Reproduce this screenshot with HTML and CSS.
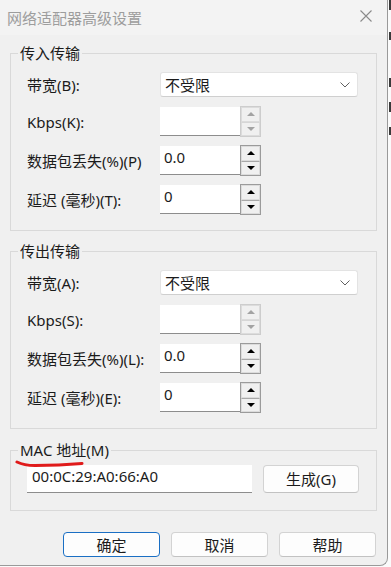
FILE: index.html
```html
<!doctype html>
<html lang="zh-CN">
  <head>
    <meta charset="UTF-8">
    <meta name="viewport" content="width=device-width, initial-scale=1.0">
    <title>网络适配器高级设置</title>
    <link rel="stylesheet" href="styles.css">
  </head>
  <body>
    <div class="dialog">
      <div class="titlebar">
        <span class="title">网络适配器高级设置</span>
        <svg class="close" width="12" height="12" viewBox="0 0 12 12"><path d="M0.5 0.5L11.5 11.5M11.5 0.5L0.5 11.5"/></svg>
      </div>

      <!-- incoming -->
      <fieldset class="group">
        <legend>传入传输</legend>
        <div class="rows">
          <label>带宽(B):</label>
          <div class="select">
            <span>不受限</span>
            <svg width="10" height="6" viewBox="0 0 10 6"><path d="M0.5 0.5L5 5L9.5 0.5"/></svg>
          </div>

          <label>Kbps(K):</label>
          <div class="spin disabled">
            <div class="field"></div>
            <div class="arrows"><span class="btn"><i class="up"></i></span><span class="btn"><i class="down"></i></span></div>
          </div>

          <label>数据包丢失(%)(P)</label>
          <div class="spin">
            <div class="field">0.0</div>
            <div class="arrows"><span class="btn"><i class="up"></i></span><span class="btn"><i class="down"></i></span></div>
          </div>

          <label>延迟 (毫秒)(T):</label>
          <div class="spin">
            <div class="field">0</div>
            <div class="arrows"><span class="btn"><i class="up"></i></span><span class="btn"><i class="down"></i></span></div>
          </div>
        </div>
      </fieldset>

      <!-- outgoing -->
      <fieldset class="group">
        <legend>传出传输</legend>
        <div class="rows">
          <label>带宽(A):</label>
          <div class="select">
            <span>不受限</span>
            <svg width="10" height="6" viewBox="0 0 10 6"><path d="M0.5 0.5L5 5L9.5 0.5"/></svg>
          </div>

          <label>Kbps(S):</label>
          <div class="spin disabled">
            <div class="field"></div>
            <div class="arrows"><span class="btn"><i class="up"></i></span><span class="btn"><i class="down"></i></span></div>
          </div>

          <label>数据包丢失(%)(L):</label>
          <div class="spin">
            <div class="field">0.0</div>
            <div class="arrows"><span class="btn"><i class="up"></i></span><span class="btn"><i class="down"></i></span></div>
          </div>

          <label>延迟 (毫秒)(E):</label>
          <div class="spin">
            <div class="field">0</div>
            <div class="arrows"><span class="btn"><i class="up"></i></span><span class="btn"><i class="down"></i></span></div>
          </div>
        </div>
      </fieldset>

      <!-- mac -->
      <fieldset class="group mac">
        <legend>MAC 地址(M)</legend>
        <svg class="mark" width="70" height="8" viewBox="0 0 70 8"><path d="M2 2C6 4 10 5.5 20 5.5C34 5.5 50 5 67 3.5"/></svg>
        <div class="mac-row">
          <div class="field mac-field">00:0C:29:A0:66:A0</div>
          <button class="button gen">生成(G)</button>
        </div>
      </fieldset>

      <div class="footer">
        <button class="button default">确定</button>
        <button class="button">取消</button>
        <button class="button">帮助</button>
      </div>
    </div>

    <div class="behind">
      <span class="frag f1"></span>
      <span class="frag f2"></span>
      <span class="frag f3"></span>
      <span class="frag f4"></span>
      <span class="frag f5"></span>
    </div>
  </body>
</html>
```

FILE: styles.css
```css
html,
body {
  margin: 0;
  height: 100%;
}

body {
  display: flex;
  background: #fbfbfb;
  font-family: "Noto Sans", "Noto Sans CJK SC", sans-serif;
  font-size: 15px;
  color: #1b1b1b;
  overflow: hidden;
}

.dialog {
  width: 387px;
  height: 565px;
  flex: none;
  background: #f0f0f0;
  border-right: 1px solid #9a9a9a;
  border-bottom: 1px solid #9a9a9a;
  border-bottom-right-radius: 8px;
}

.titlebar {
  height: 35px;
  display: flex;
  align-items: center;
  justify-content: space-between;
  padding: 0 15px 0 7px;
  background: #f3f3f3;
}

.title {
  color: #9d9d9d;
  line-height: 20px;
}

.close path {
  stroke: #8a8a8a;
  stroke-width: 1.1;
  fill: none;
}

.close {
  margin-top: -3px;
}

.group {
  width: 365px;
  margin: 8px 0 0 10px;
  padding: 0 0 16px 0;
  border: 1px solid #d9d9d9;
  min-width: 0;
  position: relative;
}

.group + .group {
  margin-top: 10px;
}

.group.mac {
  margin-top: 11px;
  padding-bottom: 17px;
}

legend {
  margin-left: 7px;
  padding: 0 2px;
  line-height: 20px;
}

.rows {
  display: grid;
  grid-template-columns: 133px auto;
  row-gap: 10px;
  align-items: center;
  padding: 9px 0 0 16px;
}

.rows label {
  line-height: 20px;
  white-space: nowrap;
}

.select {
  width: 185px;
  height: 23px;
  display: flex;
  align-items: center;
  justify-content: space-between;
  padding: 0 7px 0 4px;
  background: #fff;
  border: 1px solid #e3e3e3;
  border-bottom-color: #cfcfcf;
  border-radius: 3px;
  line-height: 20px;
}

.select path {
  stroke: #606060;
  stroke-width: 1;
  fill: none;
}

.spin {
  display: flex;
  height: 29px;
}

.field {
  background: #fff;
  border-bottom: 1px solid #8d8d8d;
  width: 76px;
  height: 28px;
  padding-left: 4px;
  line-height: 22px;
}

.arrows {
  display: flex;
  flex-direction: column;
  border: 1px solid #9b9b9b;
  box-sizing: border-box;
  margin-top: -1px;
  height: 31px;
  width: 21px;
}

.btn {
  flex: 1;
  display: flex;
  align-items: center;
  justify-content: center;
  background: #f0f0f0;
  border: 1px solid #dcdcdc;
}

.btn + .btn {
  border-top-color: #a8a8a8;
}

.up,
.down {
  width: 0;
  height: 0;
  border-left: 4px solid transparent;
  border-right: 4px solid transparent;
}

.up {
  border-bottom: 4px solid #000;
}

.down {
  border-top: 4px solid #000;
}

.disabled .arrows {
  border-color: #cdcdcd;
}

.disabled .btn + .btn {
  border-top-color: #d6d6d6;
}

.disabled .up {
  border-bottom-color: #a3a3a3;
}

.disabled .down {
  border-top-color: #a3a3a3;
}

.mark {
  position: absolute;
  left: 4px;
  top: 0;
}

.mark path {
  stroke: #e01b1b;
  stroke-width: 3;
  stroke-linecap: round;
  fill: none;
}

.mac-row {
  display: flex;
  align-items: center;
  gap: 11px;
  padding: 5px 0 0 16px;
}

.mac-field {
  width: 220px;
  height: 27px;
  padding-left: 5px;
}

.button {
  font: inherit;
  color: #1b1b1b;
  background: #fdfdfd;
  border: 1px solid #d3d3d3;
  border-bottom-color: #c2c2c2;
  border-radius: 4px;
  padding: 0;
  line-height: 20px;
}

.gen {
  width: 96px;
  height: 28px;
}

.footer {
  display: flex;
  justify-content: flex-end;
  gap: 11px;
  padding: 21px 11px 0 0;
}

.footer .button {
  width: 97px;
  height: 25px;
}

.button.default {
  border: 1px solid #1a6fc4;
}

.behind {
  flex: 1;
  display: flex;
  flex-direction: column;
  background: #fbfbfb;
}

.frag {
  display: block;
  width: 2px;
  margin-left: 1px;
  background: #3a3a3a;
}

.f1 { height: 10px; margin-top: 0; }
.f2 { height: 8px; margin-top: 22px; }
.f3 { height: 9px; margin-top: 38px; }
.f4 { height: 10px; margin-top: 15px; }
.f5 { height: 8px; margin-top: 15px; }
```
